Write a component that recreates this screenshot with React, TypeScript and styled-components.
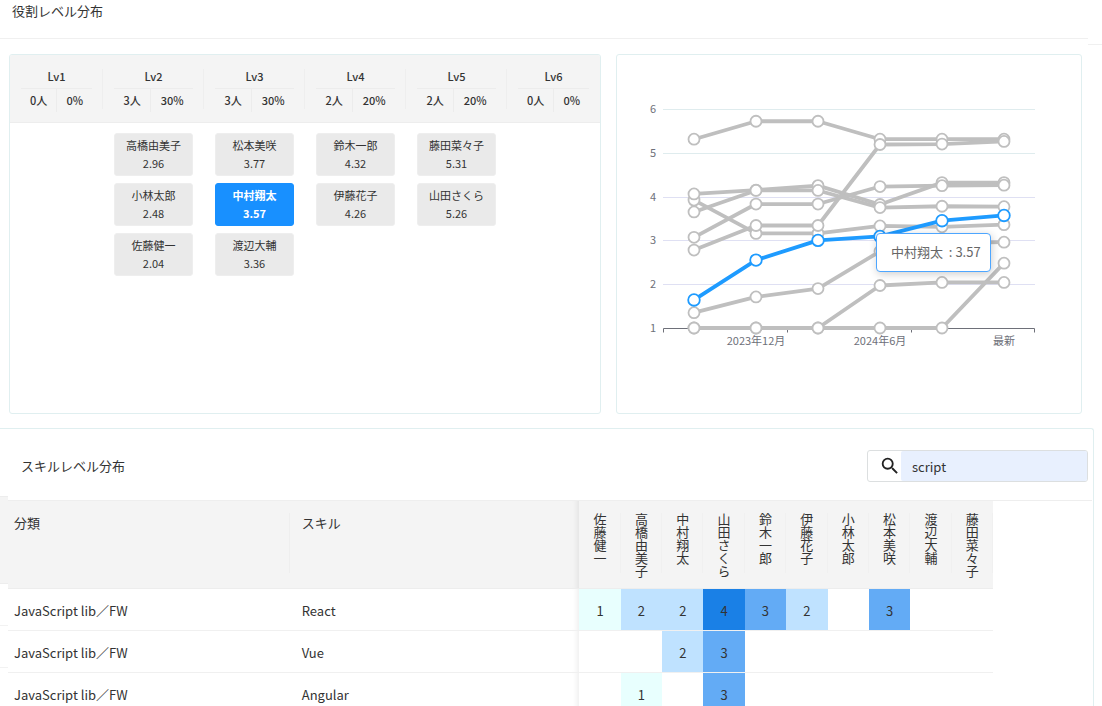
import React, { useState } from "react";
import styled, { createGlobalStyle, css } from "styled-components";
import { MdSearch } from "react-icons/md";

const GlobalStyle = createGlobalStyle`
  *, *::before, *::after { box-sizing: border-box; }
  body {
    margin: 0;
    background: #fff;
    color: #333;
    font-family: "Noto Sans CJK JP", sans-serif;
    font-size: 13px;
    line-height: 20px;
  }
  button, input { font: inherit; color: inherit; }
  h1, h2, h3, p, ul { margin: 0; padding: 0; font-weight: 400; font-size: inherit; }
`;

const Page = styled.main`
  height: 100vh;
  overflow: hidden;
  display: flex;
  flex-direction: column;
`;

/* ---- page header ---- */

const TopBar = styled.header`
  display: flex;
  align-items: flex-start;
`;

const TopTitle = styled.h1`
  flex: 1;
  height: 39px;
  padding: 1px 12px;
  border-bottom: 1px solid #f0f0f0;
`;

const TopTail = styled.div`
  width: 14px;
  height: 45px;
  border-bottom: 1px solid #f0f0f0;
`;

const Panels = styled.div`
  display: grid;
  grid-template-columns: 592fr 466fr;
  gap: 15px;
  padding: 9px 20px 14px 9px;
`;

const Panel = styled.section`
  min-height: 360px;
  border: 1px solid #e0eff0;
  border-radius: 3px;
  overflow: hidden;
`;

/* ---- role level distribution ---- */

const Levels = styled.div`
  display: grid;
  grid-template-columns: 93fr 101fr 101fr 101fr 101fr 93fr;
`;

const LevelColumn = styled.section`
  min-width: 0;
  &:last-child header > div { border-right-color: transparent; }
`;

const LevelHead = styled.header`
  height: 68px;
  padding: 14px 0 13px;
  background: #f4f4f4;
  border-bottom: 1px solid #ededed;
  font-size: 11px;
  line-height: 14px;
  font-weight: 500;
  text-align: center;
`;

const LevelHeadInner = styled.div`
  height: 40px;
  padding: 0 10px 0 11px;
  border-right: 1px solid #eeeeee;
`;

const LevelName = styled.h3`
  height: 20px;
  font-weight: 500;
  border-bottom: 1px solid #ececec;
`;

const LevelStats = styled.div`
  display: flex;
  height: 23px;
  line-height: 22px;
`;

const Stat = styled.span`
  flex: 1 1 auto;
  white-space: nowrap;
  & + & { border-left: 1px solid #ececec; }
`;

const MemberList = styled.ul`
  display: flex;
  flex-direction: column;
  gap: 7px;
  padding: 10px 11px;
  list-style: none;
`;

const MemberCard = styled.button<{ $active: boolean }>`
  display: block;
  width: 100%;
  padding: 2px 0 3px;
  border: 1px solid #eeeeee;
  border-radius: 3px;
  background: #eaeaea;
  font-size: 11px;
  line-height: 18px;
  text-align: center;
  cursor: pointer;
  ${({ $active }) =>
    $active &&
    css`
      border-color: #1890ff;
      background: #1890ff;
      color: #fff;
      font-weight: 700;
    `}
  span { display: block; }
`;

/* ---- history chart ---- */

const ChartArea = styled.div`
  position: relative;
  svg { display: block; width: 100%; height: auto; }
  text { font-size: 11px; fill: #6e7079; }
`;

const Tooltip = styled.div`
  position: absolute;
  left: 259px;
  top: 178px;
  padding: 8px 9px 9px 14px;
  border: 1px solid #4da6ff;
  border-radius: 4px;
  background: #fff;
  box-shadow: 1px 2px 9px rgba(0, 0, 0, 0.2);
  color: #666;
  white-space: nowrap;
`;

/* ---- skill level distribution ---- */

const SkillSection = styled.section`
  flex: 1 0 auto;
  margin-right: 8px;
  border: 1px solid #e0eff0;
  border-width: 1px 1px 0 0;
  border-top-right-radius: 3px;
`;

const SkillHead = styled.header`
  display: flex;
  align-items: center;
  justify-content: space-between;
  height: 67px;
  padding: 6px 5px 0 21px;
`;

const SearchBox = styled.label`
  display: flex;
  align-items: center;
  width: 221px;
  height: 32px;
  padding-left: 11px;
  border: 1px solid #dcdfe0;
  border-radius: 3px;
  svg { width: 22px; height: 22px; color: #222; }
`;

const SearchInput = styled.input`
  flex: 1;
  min-width: 0;
  height: 30px;
  padding: 2px 11px 0;
  border: 0;
  border-radius: 2px;
  outline: 0;
  background: #e8f0fe;
`;

const TableArea = styled.div`
  display: flex;
  align-items: flex-start;
`;

const Gutter = styled.div`
  width: 8px;
`;

const GutterHead = styled.div`
  height: 88px;
  background: #f4f4f4;
  border: 1px solid #ededed;
  border-width: 1px 0;
`;

const GutterRow = styled.div`
  height: 42px;
  border-bottom: 1px solid #f2f2f2;
`;

const TableWrap = styled.div`
  flex: 1;
  margin: 4px 1px 0 0;
  padding-right: 99px;
  border-top: 1px solid #eeeeee;
`;

const SkillTable = styled.table`
  width: 100%;
  table-layout: fixed;
  border-collapse: separate;
  border-spacing: 0;
`;

const LabelCol = styled.col<{ $width: string }>`
  width: ${({ $width }) => $width};
`;

const HeadCell = styled.th`
  height: 88px;
  padding: 12px 0 13px;
  background: #f4f4f4;
  border-bottom: 1px solid #ededed;
  font-weight: 400;
  text-align: left;
  vertical-align: top;
`;

const HeadLabel = styled.div<{ $divider?: boolean }>`
  height: 60px;
  padding: 0 6px;
  border-right: 1px solid ${({ $divider }) => ($divider ? "#eeeeee" : "transparent")};
`;

const HeadLabelSecond = styled(HeadLabel)`
  padding-left: 12px;
`;

const PersonHead = styled.div`
  display: flex;
  justify-content: center;
  height: 60px;
  border-right: 1px solid #f0f0f0;
`;

const PersonName = styled.span`
  writing-mode: vertical-rl;
  white-space: nowrap;
`;

const edgeShadow = css`
  box-shadow: inset -7px 0 6px -6px rgba(0, 0, 0, 0.09);
`;

const HeadCellEdge = styled(HeadCell)`
  ${edgeShadow}
`;

const TextCell = styled.td`
  height: 42px;
  padding: 2px 6px 0;
  border-bottom: 1px solid #f0f0f0;
`;

const SkillCell = styled(TextCell)`
  padding-left: 12px;
  ${edgeShadow}
`;

const levelColors = ["transparent", "#e8fffe", "#bfe2ff", "#63abf5", "#1a80e6"];

const LevelCell = styled.td<{ $level: number }>`
  height: 42px;
  padding: 2px 0 0;
  border-bottom: 1px solid #f0f0f0;
  background: ${({ $level }) => levelColors[$level]};
  background-clip: padding-box;
  text-align: center;
`;

/* ---- data ---- */

type Member = { name: string; score: string };
type Level = { name: string; count: string; share: string; members: Member[] };

const levels: Level[] = [
  { name: "Lv1", count: "0人", share: "0%", members: [] },
  {
    name: "Lv2",
    count: "3人",
    share: "30%",
    members: [
      { name: "高橋由美子", score: "2.96" },
      { name: "小林太郎", score: "2.48" },
      { name: "佐藤健一", score: "2.04" },
    ],
  },
  {
    name: "Lv3",
    count: "3人",
    share: "30%",
    members: [
      { name: "松本美咲", score: "3.77" },
      { name: "中村翔太", score: "3.57" },
      { name: "渡辺大輔", score: "3.36" },
    ],
  },
  {
    name: "Lv4",
    count: "2人",
    share: "20%",
    members: [
      { name: "鈴木一郎", score: "4.32" },
      { name: "伊藤花子", score: "4.26" },
    ],
  },
  {
    name: "Lv5",
    count: "2人",
    share: "20%",
    members: [
      { name: "藤田菜々子", score: "5.31" },
      { name: "山田さくら", score: "5.26" },
    ],
  },
  { name: "Lv6", count: "0人", share: "0%", members: [] },
];

const history: { name: string; values: number[] }[] = [
  { name: "渡辺大輔", values: [3.92, 3.16, 3.16, 3.33, 3.31, 3.36] },
  { name: "藤田菜々子", values: [5.31, 5.72, 5.72, 5.31, 5.31, 5.31] },
  { name: "鈴木一郎", values: [4.06, 4.15, 4.25, 3.82, 4.32, 4.32] },
  { name: "松本美咲", values: [3.65, 4.14, 4.14, 3.75, 3.78, 3.77] },
  { name: "伊藤花子", values: [3.07, 3.83, 3.83, 4.23, 4.25, 4.26] },
  { name: "山田さくら", values: [2.78, 3.34, 3.34, 5.19, 5.2, 5.26] },
  { name: "高橋由美子", values: [1.35, 1.71, 1.9, 2.75, 2.94, 2.96] },
  { name: "佐藤健一", values: [1, 1, 1, 1.97, 2.04, 2.04] },
  { name: "小林太郎", values: [1, 1, 1, 1, 1, 2.48] },
  { name: "中村翔太", values: [1.64, 2.55, 3, 3.09, 3.45, 3.57] },
];

const people = [
  "佐藤健一", "高橋由美子", "中村翔太", "山田さくら", "鈴木一郎",
  "伊藤花子", "小林太郎", "松本美咲", "渡辺大輔", "藤田菜々子",
];

const skills = [
  { category: "JavaScript lib／FW", skill: "React", levels: [1, 2, 2, 4, 3, 2, 0, 3, 0, 0] },
  { category: "JavaScript lib／FW", skill: "Vue", levels: [0, 0, 2, 3, 0, 0, 0, 0, 0, 0] },
  { category: "JavaScript lib／FW", skill: "Angular", levels: [0, 1, 0, 3, 0, 0, 0, 0, 0, 0] },
];

const plot = { left: 46, right: 418, bottom: 273, unit: 43.8, step: 62 };
const px = (i: number) => plot.left + plot.step * (i + 0.5);
const py = (v: number) => plot.bottom - (v - 1) * plot.unit;

function HistoryChart({ active }: { active: string }) {
  const ordered = [
    ...history.filter((s) => s.name !== active),
    ...history.filter((s) => s.name === active),
  ];
  const current = ordered[ordered.length - 1];
  return (
    <ChartArea>
      <svg viewBox="0 0 464 358" role="img" aria-label="役割レベル推移">
        {[1, 2, 3, 4, 5, 6].map((v) => (
          <g key={v}>
            {v > 1 && (
              <line
                x1={plot.left}
                x2={plot.right}
                y1={Math.round(py(v)) + 0.5}
                y2={Math.round(py(v)) + 0.5}
                stroke={v > 4 ? "#dfecee" : "#dfe0f3"}
              />
            )}
            <text x={39} y={py(v) + 4} textAnchor="end">{v}</text>
          </g>
        ))}
        <path
          d="M46.5 277.5V273.5H417.5V277.5M170.5 273.5V277.5M294.5 273.5V277.5"
          fill="none"
          stroke="#6e7079"
        />
        <text x={px(1)} y={290} textAnchor="middle">2023年12月</text>
        <text x={px(3)} y={290} textAnchor="middle">2024年6月</text>
        <text x={px(5)} y={290} textAnchor="middle">最新</text>
        {ordered.map((s) => {
          const on = s.name === active;
          const color = on ? "#1e9bff" : "#bfbfbf";
          return (
            <g key={s.name} stroke={color}>
              <polyline
                points={s.values.map((v, i) => `${px(i)},${py(v)}`).join(" ")}
                fill="none"
                strokeWidth={3.8}
                strokeLinejoin="bevel"
              />
              {s.values.map((v, i) => (
                <circle key={i} cx={px(i)} cy={py(v)} r={on ? 5.8 : 5.5} fill="#fff" strokeWidth={1.8} />
              ))}
            </g>
          );
        })}
      </svg>
      <Tooltip role="tooltip">
        {current.name}&nbsp; : {current.values[5].toFixed(2)}
      </Tooltip>
    </ChartArea>
  );
}

export default function App() {
  const [active, setActive] = useState("中村翔太");
  const [query, setQuery] = useState("script");

  return (
    <Page>
      <GlobalStyle />
      <TopBar>
        <TopTitle>役割レベル分布</TopTitle>
        <TopTail />
      </TopBar>

      <Panels>
        <Panel>
          <Levels>
            {levels.map((level) => (
              <LevelColumn key={level.name}>
                <LevelHead>
                  <LevelHeadInner>
                    <LevelName>{level.name}</LevelName>
                    <LevelStats>
                      <Stat>{level.count}</Stat>
                      <Stat>{level.share}</Stat>
                    </LevelStats>
                  </LevelHeadInner>
                </LevelHead>
                <MemberList>
                  {level.members.map((m) => (
                    <li key={m.name}>
                      <MemberCard type="button" $active={m.name === active} onClick={() => setActive(m.name)}>
                        <span>{m.name}</span>
                        <span>{m.score}</span>
                      </MemberCard>
                    </li>
                  ))}
                </MemberList>
              </LevelColumn>
            ))}
          </Levels>
        </Panel>
        <Panel>
          <HistoryChart active={active} />
        </Panel>
      </Panels>

      <SkillSection>
        <SkillHead>
          <h2>スキルレベル分布</h2>
          <SearchBox>
            <MdSearch aria-hidden />
            <SearchInput
              type="text"
              aria-label="スキル検索"
              value={query}
              onChange={(e) => setQuery(e.target.value)}
            />
          </SearchBox>
        </SkillHead>
        <TableArea>
          <Gutter>
            <GutterHead />
            {skills.map((row) => (
              <GutterRow key={row.skill} />
            ))}
          </Gutter>
          <TableWrap>
            <SkillTable>
              <colgroup>
                <LabelCol $width="28.6%" />
                <LabelCol $width="29.4%" />
                {people.map((p) => (
                  <LabelCol key={p} $width="4.2%" />
                ))}
              </colgroup>
              <thead>
                <tr>
                  <HeadCell scope="col">
                    <HeadLabel $divider>分類</HeadLabel>
                  </HeadCell>
                  <HeadCellEdge scope="col">
                    <HeadLabelSecond>スキル</HeadLabelSecond>
                  </HeadCellEdge>
                  {people.map((p) => (
                    <HeadCell key={p} scope="col">
                      <PersonHead>
                        <PersonName>{p}</PersonName>
                      </PersonHead>
                    </HeadCell>
                  ))}
                </tr>
              </thead>
              <tbody>
                {skills.map((row) => (
                  <tr key={row.skill}>
                    <TextCell>{row.category}</TextCell>
                    <SkillCell>{row.skill}</SkillCell>
                    {row.levels.map((lv, i) => (
                      <LevelCell key={people[i]} $level={lv}>{lv || ""}</LevelCell>
                    ))}
                  </tr>
                ))}
              </tbody>
            </SkillTable>
          </TableWrap>
        </TableArea>
      </SkillSection>
    </Page>
  );
}
